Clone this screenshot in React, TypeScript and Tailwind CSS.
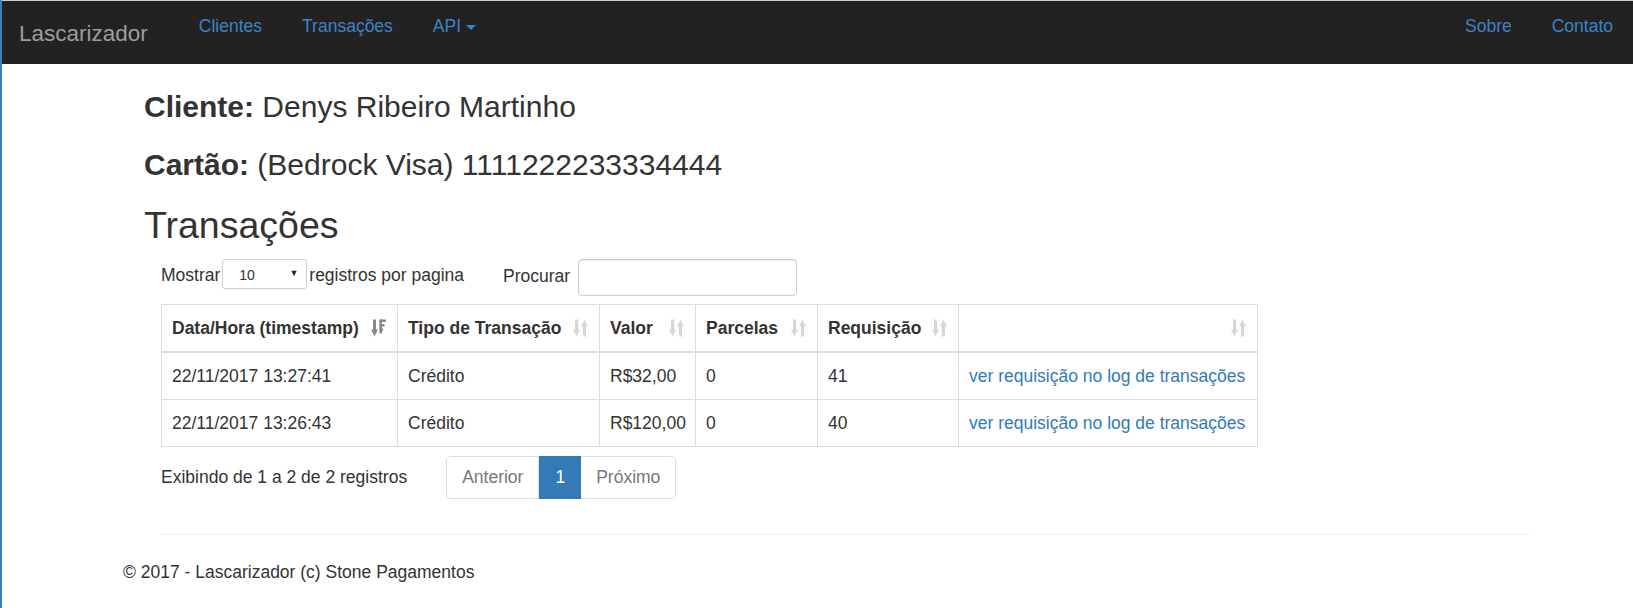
import { FC } from "react";

const SortIcon: FC<{ active?: boolean }> = ({ active }) => {
  if (active) {
    return (
      <svg width="15" height="18" viewBox="0 0 15 18" className="shrink-0">
        <rect x="2" y="0.5" width="3" height="11" fill="#8a8a8a" />
        <polygon points="0,10.5 7,10.5 3.5,17.5" fill="#8a8a8a" />
        <rect x="8.5" y="0.5" width="6.5" height="2.5" fill="#8a8a8a" />
        <rect x="8.5" y="5" width="5" height="2.5" fill="#8a8a8a" />
        <rect x="8.5" y="9.5" width="3.5" height="2.5" fill="#8a8a8a" />
        <rect x="8.5" y="0.5" width="2.5" height="14" fill="#8a8a8a" />
      </svg>
    );
  }
  return (
    <svg width="15" height="18" viewBox="0 0 15 18" className="shrink-0">
      <rect x="2" y="0.5" width="3" height="11" fill="#d6d6d6" />
      <polygon points="0,10.5 7,10.5 3.5,17.5" fill="#d6d6d6" />
      <rect x="10" y="6.5" width="3" height="11" fill="#d6d6d6" />
      <polygon points="8,7.5 15,7.5 11.5,0.5" fill="#d6d6d6" />
    </svg>
  );
};

const headers = [
  { label: "Data/Hora (timestamp)", active: true },
  { label: "Tipo de Transação" },
  { label: "Valor" },
  { label: "Parcelas" },
  { label: "Requisição" },
  { label: "" },
];

const rows = [
  ["22/11/2017 13:27:41", "Crédito", "R$32,00", "0", "41"],
  ["22/11/2017 13:26:43", "Crédito", "R$120,00", "0", "40"],
];

const App: FC = () => {
  return (
    <div className="min-h-screen border-l-2 border-[#3d7fc5] bg-white font-['Liberation_Sans',Arial,sans-serif] text-[17.5px] leading-[25px] text-[#333]">
      <nav className="flex h-[64px] items-start border-t border-[#cfcfcf] bg-[#222]">
        <a className="pl-[17px] pt-[20px] text-[22.5px] leading-[25px] text-[#9d9d9d]">
          Lascarizador
        </a>
        <ul className="ml-[31px] flex pt-[13px] text-[#3f82c4]">
          <li className="px-[20px]">Clientes</li>
          <li className="px-[20px]">Transações</li>
          <li className="flex items-center gap-[5px] px-[20px]">
            API
            <span className="mt-[1px] h-0 w-0 border-x-[5px] border-t-[5px] border-x-transparent border-t-[#3f82c4]" />
          </li>
        </ul>
        <ul className="ml-auto flex pt-[13px] text-[#3f82c4]">
          <li className="px-[20px]">Sobre</li>
          <li className="px-[20px]">Contato</li>
        </ul>
      </nav>

      <div className="pl-[142px]">
        <h3 className="mt-[26px] text-[30px] leading-[33px]">
          <strong>Cliente:</strong> Denys Ribeiro Martinho
        </h3>
        <h3 className="mt-[25px] text-[30px] leading-[33px]">
          <strong>Cartão:</strong> (Bedrock Visa) 1111222233334444
        </h3>
        <h2 className="mt-[24px] text-[37.5px] leading-[41.25px]">Transações</h2>
      </div>

      <div className="mt-[12.5px] pl-[159px]">
        <div className="flex items-start">
          <span className="pt-[4.5px]">Mostrar</span>
          <div className="ml-[2px] flex h-[30px] w-[85px] items-center justify-between rounded-[3px] border border-[#cfcfcf] pl-[16px] pr-[8px] text-[14px]">
            <span className="pt-[4px]">10</span>
            <span className="text-[9px] text-[#222]">▼</span>
          </div>
          <span className="ml-[2px] pt-[4.5px]">registros por pagina</span>
          <span className="ml-[39px] pt-[5.5px]">Procurar</span>
          <div className="ml-[8px] h-[37.5px] w-[219px] rounded-[4px] border border-[#ccc] shadow-[inset_0_1px_1px_rgba(0,0,0,0.075)]" />
        </div>

        <table className="mt-[8px] w-[1096px] table-fixed border-collapse border border-[#ddd]">
          <colgroup>
            <col className="w-[236px]" />
            <col className="w-[202px]" />
            <col className="w-[96px]" />
            <col className="w-[122px]" />
            <col className="w-[141px]" />
            <col className="w-[299px]" />
          </colgroup>
          <thead>
            <tr>
              {headers.map((h, i) => (
                <th
                  key={i}
                  className="border border-b-2 border-[#ddd] py-[10.5px] pl-[10px] pr-[11px] text-left font-bold"
                >
                  <div className="flex items-center justify-between">
                    <span>{h.label}</span>
                    <SortIcon active={h.active} />
                  </div>
                </th>
              ))}
            </tr>
          </thead>
          <tbody>
            {rows.map((r, i) => (
              <tr key={i}>
                {r.map((c, j) => (
                  <td key={j} className="border border-[#ddd] px-[10px] py-[10.5px]">
                    {c}
                  </td>
                ))}
                <td className="border border-[#ddd] px-[10px] py-[10.5px] text-[#337ab7]">
                  ver requisição no log de transações
                </td>
              </tr>
            ))}
          </tbody>
        </table>

        <div className="mt-[9px] flex items-start">
          <span className="pt-[8.5px]">Exibindo de 1 a 2 de 2 registros</span>
          <ul className="ml-[39px] flex">
            <li className="rounded-l-[5px] border border-[#ddd] px-[15px] py-[8px] text-[#777]">
              Anterior
            </li>
            <li className="border border-[#337ab7] bg-[#337ab7] px-[15px] py-[8px] text-white">
              1
            </li>
            <li className="rounded-r-[5px] border border-l-0 border-[#ddd] px-[15px] py-[8px] text-[#777]">
              Próximo
            </li>
          </ul>
        </div>
      </div>

      <hr className="ml-[159px] mt-[35px] w-[1369px] border-t border-[#eee]" />
      <footer className="ml-[121px] mt-[25px]">
        <p>© 2017 - Lascarizador (c) Stone Pagamentos</p>
      </footer>
    </div>
  );
};

export default App;
